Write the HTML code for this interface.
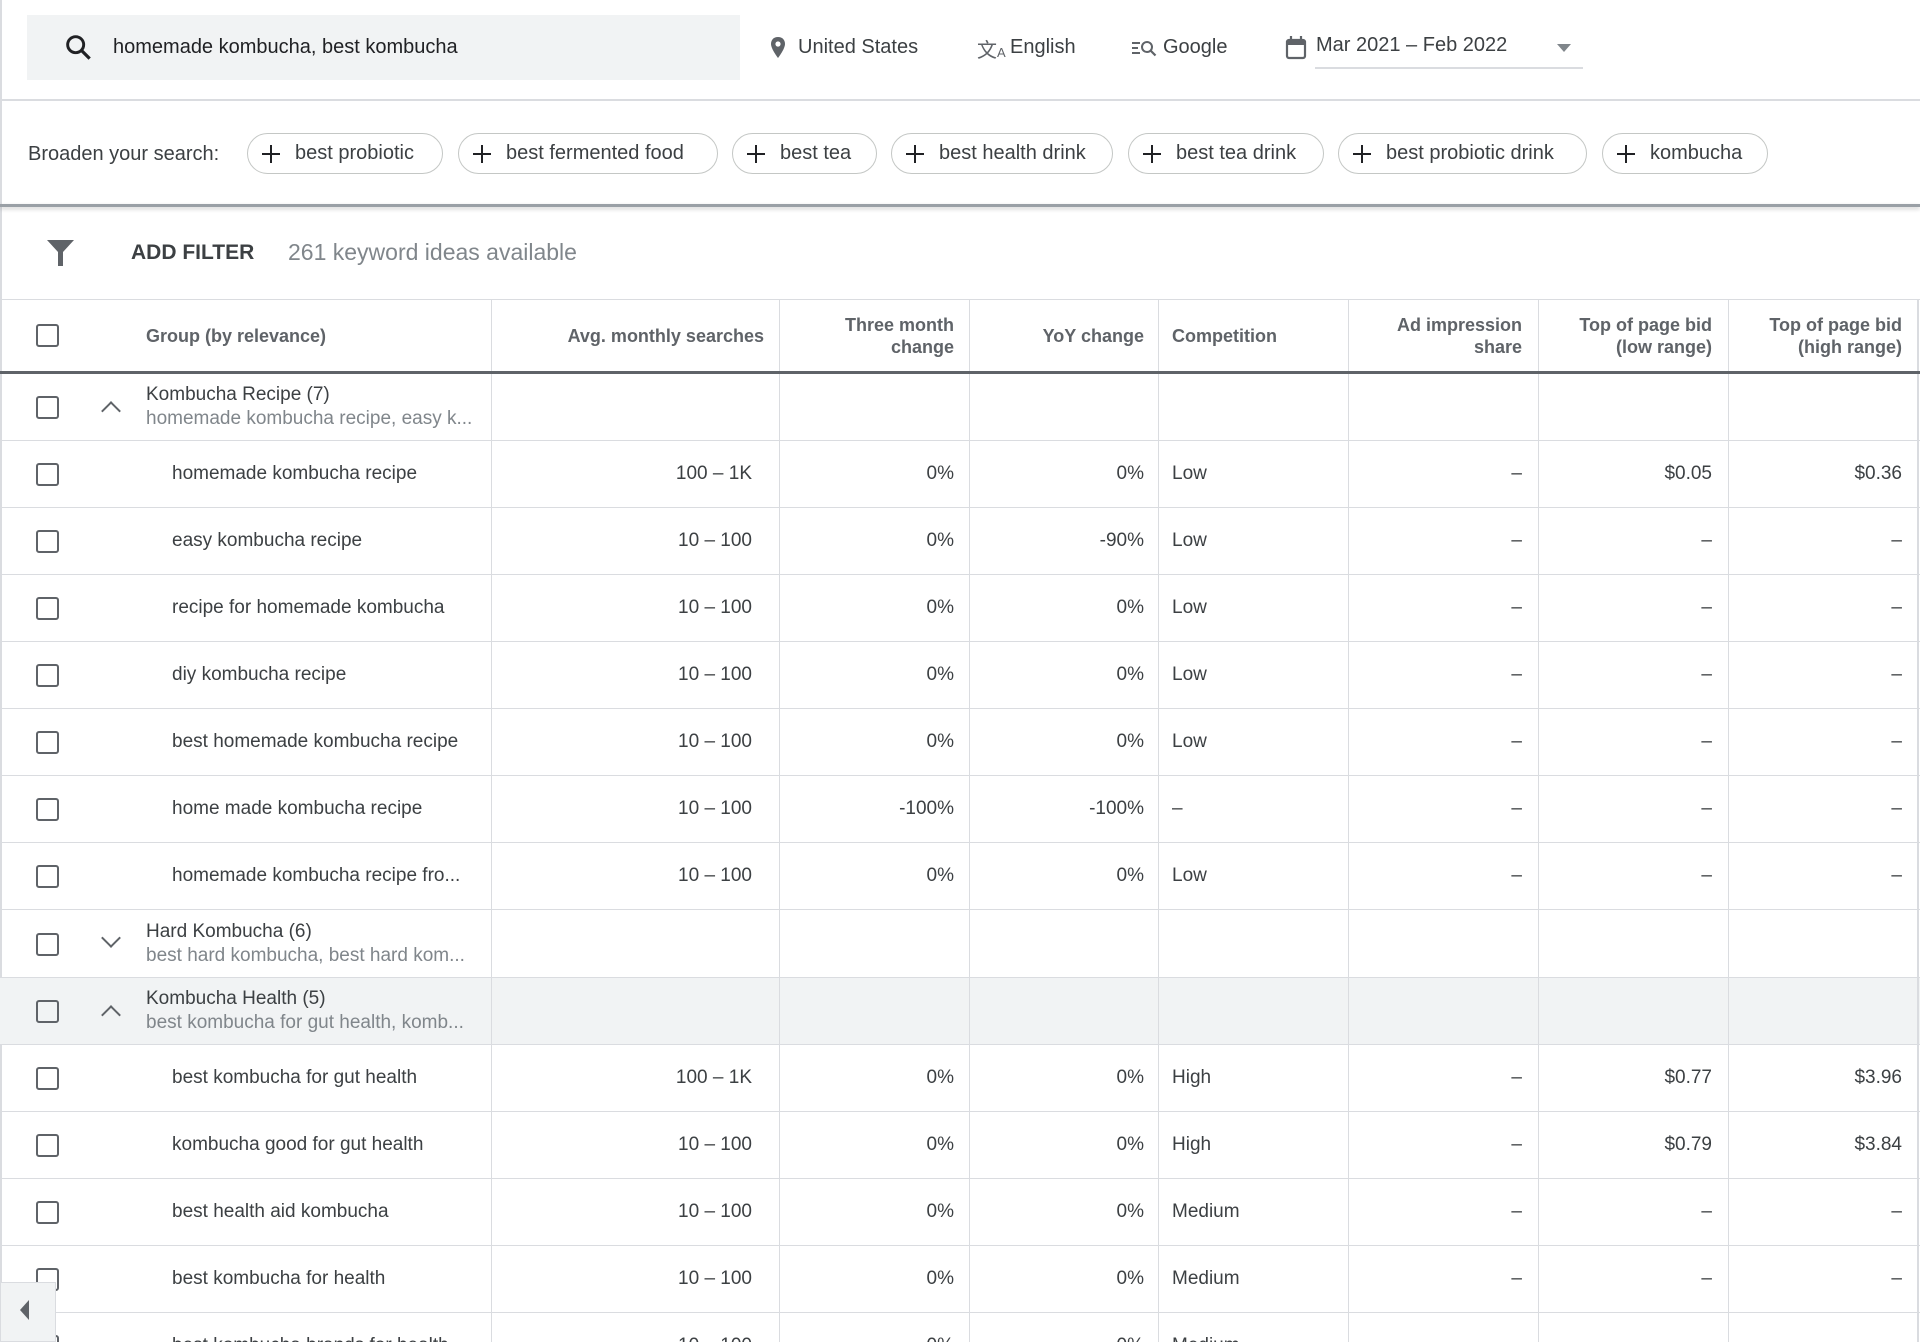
<!DOCTYPE html>
<html style="width:1920px;height:1342px;overflow:hidden"><head><meta charset="utf-8"><style>
*{box-sizing:border-box;margin:0;padding:0}
body{width:1920px;height:1342px;overflow:hidden;background:#fff;font-family:"Liberation Sans",Arial,sans-serif;color:#3c4043;position:relative}
.a{position:absolute;white-space:nowrap}
.chip{position:absolute;top:133px;height:41px;border:1px solid #c4c7c5;border-radius:21px;font-size:20px;line-height:39px;color:#3c4043;padding-left:47px}
.chip:before{content:"";position:absolute;left:14px;top:19px;width:18px;height:2px;background:#202124}
.chip:after{content:"";position:absolute;left:22px;top:11px;width:2px;height:18px;background:#202124}
.row{position:absolute;left:0;width:1920px;height:67px;border-bottom:1px solid #dadce0;overflow:hidden}
.row .c{position:absolute;top:22px;font-size:19px;color:#3c4043;white-space:nowrap}
.cb{position:absolute;left:36px;top:22px;width:23px;height:23px;border:2.5px solid #5f6368;border-radius:3px}
.vl{position:absolute;top:300px;width:1px;height:1042px;background:#dadce0}
.gt{position:absolute;left:146px;top:10px;font-size:19px;color:#3c4043;white-space:nowrap}
.gs{position:absolute;left:146px;top:34px;font-size:19px;color:#80868b;white-space:nowrap}
.chev{position:absolute;left:104px;top:26px;width:14px;height:14px;border-left:2px solid #5f6368;border-top:2px solid #5f6368}
.hd{position:absolute;font-size:18px;font-weight:bold;color:#5f6368;text-align:right;line-height:22px;white-space:nowrap}
</style></head><body>
<div class="a" style="left:0;top:0;width:2px;height:1342px;background:#dadce0"></div>
<div class="a" style="left:27px;top:15px;width:713px;height:65px;background:#f1f3f4"></div>
<svg class="a" style="left:63px;top:32px" width="32" height="32" viewBox="0 0 24 24"><circle cx="9.5" cy="9.5" r="6" fill="none" stroke="#202124" stroke-width="2.2"/><path d="M14 14l6 6" stroke="#202124" stroke-width="2.4"/></svg>
<div class="a" style="left:113px;top:36px;font-size:20px;color:#202124">homemade kombucha, best kombucha</div>
<svg class="a" style="left:768px;top:36px" width="20" height="24" viewBox="0 0 20 24"><path d="M10 1C5.6 1 3 4 3 8c0 5 7 14 7 14s7-9 7-14c0-4-2.6-7-7-7z" fill="#5f6368"/><circle cx="10" cy="8" r="2.6" fill="#fff"/></svg>
<div class="a" style="left:798px;top:36px;font-size:20px;color:#3c4043">United States</div>
<div class="a" style="left:977px;top:34px;font-size:20px;color:#5f6368">文<span style="font-size:13px">A</span></div>
<div class="a" style="left:1010px;top:36px;font-size:20px;color:#3c4043">English</div>
<svg class="a" style="left:1131px;top:38px" width="26" height="20" viewBox="0 0 26 20"><path d="M1 5h8M1 10h6M1 15h8" stroke="#5f6368" stroke-width="2"/><circle cx="16" cy="9" r="5" fill="none" stroke="#5f6368" stroke-width="2"/><path d="M19.5 12.5l5 5" stroke="#5f6368" stroke-width="2.2"/></svg>
<div class="a" style="left:1163px;top:36px;font-size:20px;color:#3c4043">Google</div>
<svg class="a" style="left:1285px;top:35px" width="22" height="25" viewBox="0 0 22 25"><rect x="2" y="5" width="18" height="18" rx="2" fill="none" stroke="#5f6368" stroke-width="2.2"/><rect x="2" y="5" width="18" height="5" fill="#5f6368"/><path d="M6 1v5M16 1v5" stroke="#5f6368" stroke-width="2.2"/></svg>
<div class="a" style="left:1316px;top:34px;font-size:20px;color:#3c4043">Mar 2021 – Feb 2022</div>
<div class="a" style="left:1557px;top:44px;width:0;height:0;border-left:7px solid transparent;border-right:7px solid transparent;border-top:8px solid #80868b"></div>
<div class="a" style="left:1315px;top:67px;width:268px;height:2px;background:#dadce0"></div>
<div class="a" style="left:0;top:99px;width:1920px;height:2px;background:#dadce0"></div>
<div class="a" style="left:28px;top:143px;font-size:20px;color:#3c4043">Broaden your search:</div>
<div class="chip" style="left:247px;width:196px">best probiotic</div>
<div class="chip" style="left:458px;width:260px">best fermented food</div>
<div class="chip" style="left:732px;width:145px">best tea</div>
<div class="chip" style="left:891px;width:222px">best health drink</div>
<div class="chip" style="left:1128px;width:196px">best tea drink</div>
<div class="chip" style="left:1338px;width:249px">best probiotic drink</div>
<div class="chip" style="left:1602px;width:166px">kombucha</div>
<div class="a" style="left:0;top:204px;width:1920px;height:3px;background:#9aa0a6;box-shadow:0 2px 4px rgba(0,0,0,.2)"></div>
<svg class="a" style="left:47px;top:240px" width="27" height="27" viewBox="0 0 27 27"><path d="M0 0h27L16 12v14h-5V12z" fill="#5f6368"/></svg>
<div class="a" style="left:131px;top:241px;font-size:21px;font-weight:bold;color:#3c4043">ADD FILTER</div>
<div class="a" style="left:288px;top:239px;font-size:23px;color:#80868b">261 keyword ideas available</div>
<div class="a" style="left:0;top:299px;width:1920px;height:1px;background:#dadce0"></div>
<div class="cb" style="top:324px"></div>
<div class="hd" style="left:146px;top:325px">Group (by relevance)</div>
<div class="hd" style="right:1156px;top:325px">Avg. monthly searches</div>
<div class="hd" style="right:966px;top:314px">Three month<br>change</div>
<div class="hd" style="right:776px;top:325px">YoY change</div>
<div class="hd" style="left:1172px;top:325px;text-align:left">Competition</div>
<div class="hd" style="right:398px;top:314px">Ad impression<br>share</div>
<div class="hd" style="right:208px;top:314px">Top of page bid<br>(low range)</div>
<div class="hd" style="right:18px;top:314px">Top of page bid<br>(high range)</div>

<div class="row" style="top:374px"><div class="cb"></div><div class="chev" style="transform:rotate(45deg);top:30px"></div><div class="gt">Kombucha Recipe (7)</div><div class="gs">homemade kombucha recipe, easy k...</div></div>
<div class="row" style="top:441px"><div class="cb"></div><div class="c" style="left:172px">homemade kombucha recipe</div><div class="c" style="right:1168px">100 – 1K</div><div class="c" style="right:966px">0%</div><div class="c" style="right:776px">0%</div><div class="c" style="left:1172px">Low</div><div class="c" style="right:398px">–</div><div class="c" style="right:208px">$0.05</div><div class="c" style="right:18px">$0.36</div></div>
<div class="row" style="top:508px"><div class="cb"></div><div class="c" style="left:172px">easy kombucha recipe</div><div class="c" style="right:1168px">10 – 100</div><div class="c" style="right:966px">0%</div><div class="c" style="right:776px">-90%</div><div class="c" style="left:1172px">Low</div><div class="c" style="right:398px">–</div><div class="c" style="right:208px">–</div><div class="c" style="right:18px">–</div></div>
<div class="row" style="top:575px"><div class="cb"></div><div class="c" style="left:172px">recipe for homemade kombucha</div><div class="c" style="right:1168px">10 – 100</div><div class="c" style="right:966px">0%</div><div class="c" style="right:776px">0%</div><div class="c" style="left:1172px">Low</div><div class="c" style="right:398px">–</div><div class="c" style="right:208px">–</div><div class="c" style="right:18px">–</div></div>
<div class="row" style="top:642px"><div class="cb"></div><div class="c" style="left:172px">diy kombucha recipe</div><div class="c" style="right:1168px">10 – 100</div><div class="c" style="right:966px">0%</div><div class="c" style="right:776px">0%</div><div class="c" style="left:1172px">Low</div><div class="c" style="right:398px">–</div><div class="c" style="right:208px">–</div><div class="c" style="right:18px">–</div></div>
<div class="row" style="top:709px"><div class="cb"></div><div class="c" style="left:172px">best homemade kombucha recipe</div><div class="c" style="right:1168px">10 – 100</div><div class="c" style="right:966px">0%</div><div class="c" style="right:776px">0%</div><div class="c" style="left:1172px">Low</div><div class="c" style="right:398px">–</div><div class="c" style="right:208px">–</div><div class="c" style="right:18px">–</div></div>
<div class="row" style="top:776px"><div class="cb"></div><div class="c" style="left:172px">home made kombucha recipe</div><div class="c" style="right:1168px">10 – 100</div><div class="c" style="right:966px">-100%</div><div class="c" style="right:776px">-100%</div><div class="c" style="left:1172px">–</div><div class="c" style="right:398px">–</div><div class="c" style="right:208px">–</div><div class="c" style="right:18px">–</div></div>
<div class="row" style="top:843px"><div class="cb"></div><div class="c" style="left:172px">homemade kombucha recipe fro...</div><div class="c" style="right:1168px">10 – 100</div><div class="c" style="right:966px">0%</div><div class="c" style="right:776px">0%</div><div class="c" style="left:1172px">Low</div><div class="c" style="right:398px">–</div><div class="c" style="right:208px">–</div><div class="c" style="right:18px">–</div></div>
<div class="row" style="top:911px"><div class="cb"></div><div class="chev" style="transform:rotate(225deg);top:20px"></div><div class="gt">Hard Kombucha (6)</div><div class="gs">best hard kombucha, best hard kom...</div></div>
<div class="row" style="top:978px;background:#f1f3f4"><div class="cb"></div><div class="chev" style="transform:rotate(45deg);top:30px"></div><div class="gt">Kombucha Health (5)</div><div class="gs">best kombucha for gut health, komb...</div></div>
<div class="row" style="top:1045px"><div class="cb"></div><div class="c" style="left:172px">best kombucha for gut health</div><div class="c" style="right:1168px">100 – 1K</div><div class="c" style="right:966px">0%</div><div class="c" style="right:776px">0%</div><div class="c" style="left:1172px">High</div><div class="c" style="right:398px">–</div><div class="c" style="right:208px">$0.77</div><div class="c" style="right:18px">$3.96</div></div>
<div class="row" style="top:1112px"><div class="cb"></div><div class="c" style="left:172px">kombucha good for gut health</div><div class="c" style="right:1168px">10 – 100</div><div class="c" style="right:966px">0%</div><div class="c" style="right:776px">0%</div><div class="c" style="left:1172px">High</div><div class="c" style="right:398px">–</div><div class="c" style="right:208px">$0.79</div><div class="c" style="right:18px">$3.84</div></div>
<div class="row" style="top:1179px"><div class="cb"></div><div class="c" style="left:172px">best health aid kombucha</div><div class="c" style="right:1168px">10 – 100</div><div class="c" style="right:966px">0%</div><div class="c" style="right:776px">0%</div><div class="c" style="left:1172px">Medium</div><div class="c" style="right:398px">–</div><div class="c" style="right:208px">–</div><div class="c" style="right:18px">–</div></div>
<div class="row" style="top:1246px"><div class="cb"></div><div class="c" style="left:172px">best kombucha for health</div><div class="c" style="right:1168px">10 – 100</div><div class="c" style="right:966px">0%</div><div class="c" style="right:776px">0%</div><div class="c" style="left:1172px">Medium</div><div class="c" style="right:398px">–</div><div class="c" style="right:208px">–</div><div class="c" style="right:18px">–</div></div>
<div class="row" style="top:1313px;height:29px;border-bottom:none"><div class="cb"></div><div class="c" style="left:172px">best kombucha brands for health</div><div class="c" style="right:1168px">10 – 100</div><div class="c" style="right:966px">0%</div><div class="c" style="right:776px">0%</div><div class="c" style="left:1172px">Medium</div></div>

<div class="vl" style="left:491px"></div>
<div class="vl" style="left:779px"></div>
<div class="vl" style="left:969px"></div>
<div class="vl" style="left:1158px"></div>
<div class="vl" style="left:1348px"></div>
<div class="vl" style="left:1538px"></div>
<div class="vl" style="left:1728px"></div>
<div class="vl" style="left:1917px;width:2px"></div>
<div class="a" style="left:0;top:371px;width:1920px;height:3px;background:#5f6368"></div>

<div class="a" style="left:0;top:1282px;width:56px;height:60px;background:#f1f3f4;border:1px solid #dadce0"></div>
<div class="a" style="left:20px;top:1300px;width:0;height:0;border-top:10px solid transparent;border-bottom:10px solid transparent;border-right:9px solid #5f6368"></div>
</body></html>
